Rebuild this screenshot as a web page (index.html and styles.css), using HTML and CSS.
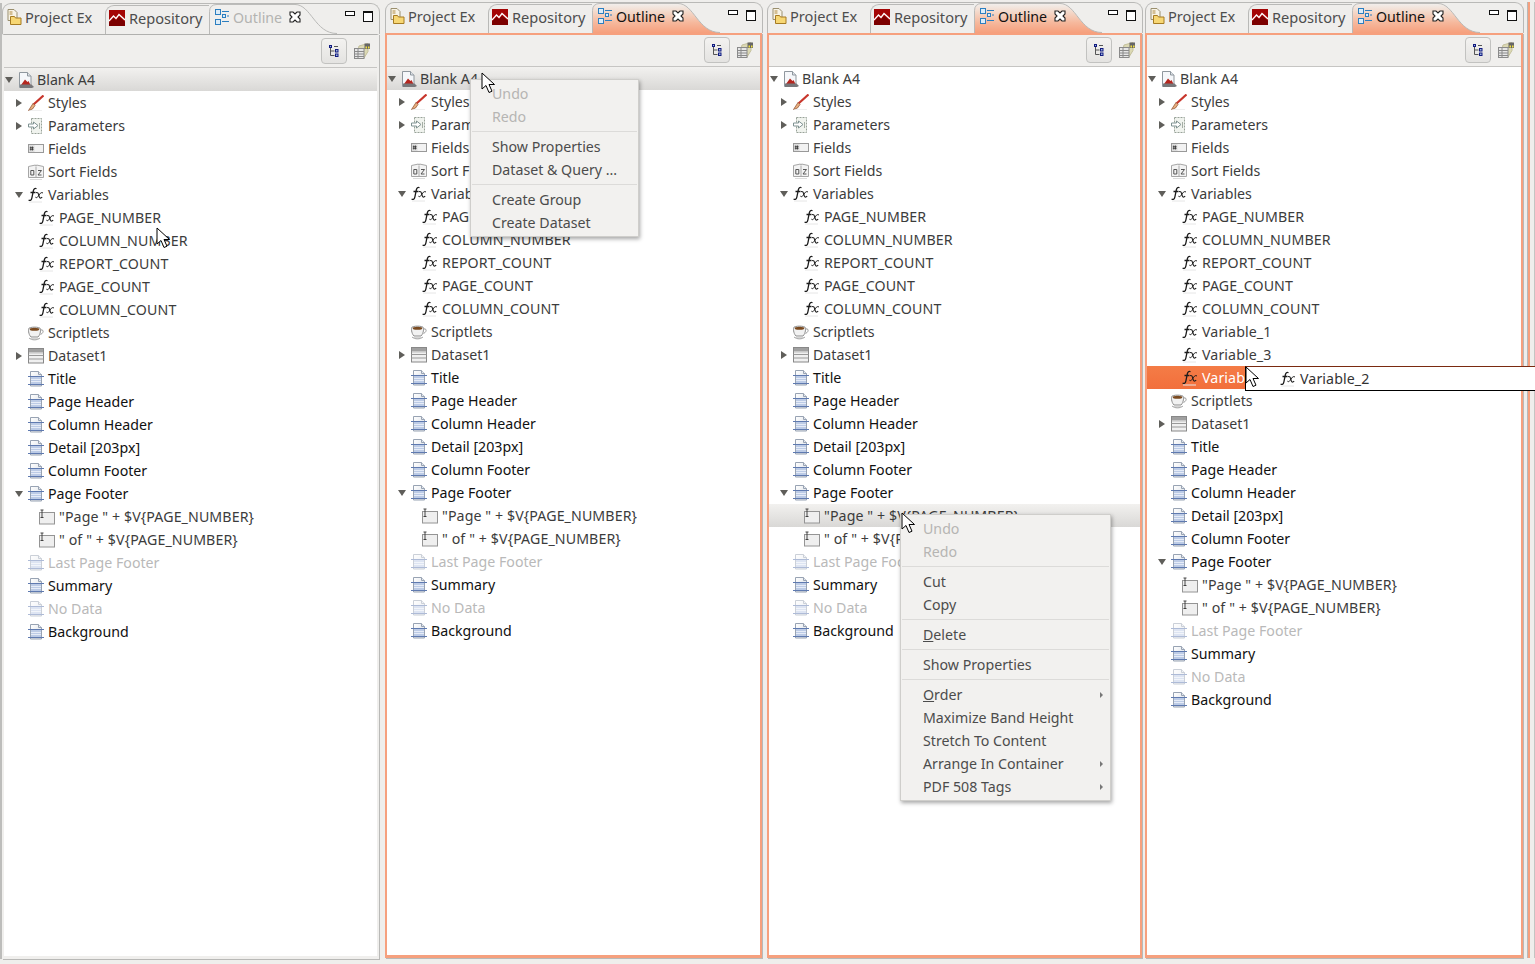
FILE: index.html
```html
<!DOCTYPE html>
<html lang="en">
<head>
<meta charset="utf-8">
<title>Outline views</title>
<link rel="stylesheet" href="styles.css">
</head>
<body>
<svg class="defs" aria-hidden="true">
  <defs>
    <linearGradient id="tabfill" x1="0" y1="0" x2="0" y2="1"><stop offset="0" stop-color="#f1efed"/><stop offset=".25" stop-color="#f3dccf"/><stop offset=".65" stop-color="#f6b89c"/><stop offset="1" stop-color="#f69f7c"/></linearGradient>
    <linearGradient id="doc" x1="0" y1="0" x2="1" y2="1"><stop offset="0" stop-color="#fff"/><stop offset="1" stop-color="#d8dde4"/></linearGradient>
    <symbol id="i-project" viewBox="0 0 16 16"><path d="M2 .5h6l3 3v8H2z" fill="#f7f3e6" stroke="#9a8f6e"/><path d="M3.500 3h3M3.500 5h3" stroke="#b08a40"/><path d="M4.500 7.500h4l1 1.500h5.500v6.500h-10.500z" fill="#f7d774" stroke="#a67b22"/></symbol>
    <symbol id="i-repo" viewBox="0 0 16 16"><rect width="16" height="16" fill="#a40606"/><path d="M0 11 4.500 6 7 8.500 10 4.500 16 10" fill="none" stroke="#fff" stroke-width="1.300"/><path d="M0 12.500 4.500 8 7 10.500 10 7 16 12v4H0z" fill="#7c0000"/></symbol>
    <symbol id="i-outline" viewBox="0 0 14 16"><g fill="#dcecf8" stroke="#2c7fc0"><rect x=".5" y=".5" width="5" height="5"/><rect x=".5" y="10.500" width="5" height="5"/></g><rect x="7.500" y="5.500" width="3" height="3" fill="#dcecf8" stroke="#2c7fc0"/><path d="M7 2.500h7M12 7h2M7 12.500h7" stroke="#2c7fc0"/></symbol>
    <symbol id="i-close" viewBox="0 0 12 12"><path d="M1 1h3l2 2 2-2h3v3l-2 2 2 2v3H8L6 9l-2 2H1V8l2-2-2-2z" fill="#fff" stroke="#222" stroke-width="1.100"/></symbol>
    <symbol id="i-tree" viewBox="0 0 10 12"><path d="M1.500 2v8.500h4M1.500 6h4" fill="none" stroke="#555"/><g fill="#9db4e0" stroke="#111a80"><rect x=".5" y=".5" width="2" height="2"/><rect x="6.500" y="4.500" width="2.500" height="2.500"/><rect x="6.500" y="9" width="2.500" height="2.500"/></g><path d="M5 1.500h4" stroke="#555"/></symbol>
    <symbol id="i-table" viewBox="0 0 16 16"><path d="M5 3 14 .5v8L10 15H2z" fill="#dcd9b4" stroke="#c4c09c"/><rect x=".5" y="5.500" width="9.500" height="10" fill="#e6e6e6" stroke="#8a8a8a"/><path d="M.5 8.500h9.500M.5 11h9.500M.5 13.500h9.500M4 5.500v10" stroke="#8a8a8a"/><rect x="10.500" y=".5" width="5.500" height="5.500" fill="#666"/><path d="M11.500 3.500h1.500v2h-1.500zM14 3.500h1.500v2H14z" fill="#f5e23c"/></symbol>
    <symbol id="i-report" viewBox="0 0 16 16"><path d="M1.500.5h8l3.500 3.500v11.500h-11.500z" fill="#f5f7fa" stroke="#8f979e"/><path d="M9.500.5v3.500h3.500" fill="#dfe3e8" stroke="#8f979e"/><path d="M3 13 7 7.500l2.500 2.500 1-1 2 4z" fill="#b5271f"/><path d="M2 12.500h11.500l2.500 2.500-2 1H2z" fill="#77777a"/></symbol>
    <symbol id="i-styles" viewBox="0 0 16 16"><path d="M15.500 .5 5.500 9.500" stroke="#c8362c" stroke-width="2.200"/><path d="M5 8.500 7 10.500 4.500 14 .5 15.500z" fill="#e8b080" stroke="#8a4a2a" stroke-width=".7"/><path d="M1 16h13" stroke="#dedede"/></symbol>
    <symbol id="i-param" viewBox="0 0 16 16"><path d="M3.500.5h10v15h-10z" fill="#f0f3ee" stroke="#98a298" stroke-dasharray="2 1"/><path d="M.5 6h5V4l4.500 3.500L5.500 11V9h-5z" fill="#fff" stroke="#7f9292"/><path d="M11.500 5v6" stroke="#a5aea5"/></symbol>
    <symbol id="i-field" viewBox="0 0 16 16"><rect x=".5" y="3.500" width="15" height="8" fill="#f2f2f2" stroke="#999"/><rect x="1" y="4" width="5.500" height="7" fill="#dedede"/><path d="M2.800 5.500v4M4.500 5.500v4M1.800 6.700h3.800M1.800 8.300h3.800" stroke="#333" stroke-width=".8"/></symbol>
    <symbol id="i-sort" viewBox="0 0 16 16"><path d="M.5 2.500 7.500 1 8 2l.5-1 7 1.500v11H.5z" fill="#f3f3f3" stroke="#a6a6a6"/><path d="M8 2.500v11" stroke="#aaa"/><path d="M2.800 6.500h3v4.500h-3zM10 6.500h3.500L10 11h3.500" fill="none" stroke="#555"/><path d="M2 15.500h12" stroke="#dcdcdc"/></symbol>
    <symbol id="i-fx" viewBox="0 0 16 16"><path d="M8.500 1.700C6.800 .8 5.800 1.800 5.300 4L3.900 10.800C3.400 13.200 2.300 14 .6 13M2.500 5.500h5" fill="none" stroke="#1c1c1c" stroke-width="1.300"/><path d="M8 5.700c1.700-.6 2.200.6 2.600 2l.8 2.500c.4 1.200 1.600 1.200 2.800 0" fill="none" stroke="#1c1c1c" stroke-width="1.100"/><path d="M15 6c-1.300-.8-2.300-.3-3.300 1L9.800 9.800c-.7 1-1.600 1.100-2.400.4" fill="none" stroke="#1c1c1c" stroke-width="1"/><path d="M1 15h13" stroke="#e6e6e6"/></symbol>
    <symbol id="i-cup" viewBox="0 0 16 16"><path d="M.5 4c0-2.500 12-2.500 12 0 0 0 .5 5-2.500 8H3C0 9 .5 4 .5 4z" fill="#f2f2f2" stroke="#8e8e8e"/><ellipse cx="6.500" cy="4.300" rx="4.800" ry="1.500" fill="#7a4a20"/><path d="M12.500 5c3.500-1 3.500 3 0 4.500" fill="none" stroke="#999"/><path d="M1 13c3 2.500 8 2.500 11 0" fill="#d5d5d5" stroke="#aaa"/></symbol>
    <symbol id="i-data" viewBox="0 0 16 16"><rect x=".5" y=".5" width="15" height="14.500" fill="#f0f0f0" stroke="#888"/><rect x="1" y="1" width="14" height="3.500" fill="#a0a0a0"/><path d="M.5 7.500h15M.5 11h15" stroke="#999"/><path d="M1 5.500h14" stroke="#d8d8d8"/></symbol>
    <symbol id="i-band" viewBox="0 0 16 16"><path d="M2.500.5h8l3 3v11.500h-11z" fill="url(#doc)" stroke="#98a3b3"/><path d="M10.500.5v3h3" fill="#e4e8ee" stroke="#98a3b3"/><rect x="3" y="6" width="10" height="7" fill="#bccbe6"/><path d="M0 5.500h16M0 13.500h16" stroke="#5f7ab0"/><path d="M3 8.500h10M3 10.500h10" stroke="#e6ecf7"/></symbol>
    <symbol id="i-text" viewBox="0 0 16 16"><rect x=".5" y="3.500" width="15" height="11.500" fill="#efefef" stroke="#949494"/><path d="M1.500 1h3M1.500 8.500h3M3 1v7.500" stroke="#333" stroke-width=".9"/></symbol>
    <symbol id="i-cursor" viewBox="0 0 14 22"><path d="M1 1v16l4-3.500 3 7 3-1.300-3-6.700h5.500z" fill="#fff" stroke="#000"/></symbol>
  </defs>
</svg>

<div class="desk">

<section class="panel p1 idle">
  <div class="tabs">
    <div class="tab first"><svg class="ti"><use href="#i-project"/></svg><span>Project Ex</span></div>
    <div class="tab second"><svg class="ti"><use href="#i-repo"/></svg><span>Repository</span></div>
    <div class="tab active"><svg class="shape" viewBox="0 0 128 31" preserveAspectRatio="none"><path class="sf" d="M.5 31V8Q.5 .5 8 .5H86C102 .5 106 30.500 128 30.500V31Z"/><path class="sl" d="M.5 31V8Q.5 .5 8 .5H86C102 .5 106 30.500 128 30.500"/></svg><svg class="ti oi"><use href="#i-outline"/></svg><span class="tname">Outline</span><svg class="x"><use href="#i-close"/></svg></div>
    <div class="winbtns"><i class="min"></i><i class="max"></i></div>
  </div>
  <div class="frame">
    <div class="toolbar"><div class="tb"><svg class="tbi"><use href="#i-tree"/></svg></div><svg class="tbt"><use href="#i-table"/></svg></div>
    <div class="tree">
      <div class="row l0 sel"><i class="tw d"></i><svg class="ic"><use href="#i-report"/></svg><span>Blank A4</span></div>
      <div class="row l1"><i class="tw c"></i><svg class="ic"><use href="#i-styles"/></svg><span>Styles</span></div>
      <div class="row l1"><i class="tw c"></i><svg class="ic"><use href="#i-param"/></svg><span>Parameters</span></div>
      <div class="row l1"><i class="tw"></i><svg class="ic"><use href="#i-field"/></svg><span>Fields</span></div>
      <div class="row l1"><i class="tw"></i><svg class="ic"><use href="#i-sort"/></svg><span>Sort Fields</span></div>
      <div class="row l1"><i class="tw d"></i><svg class="ic"><use href="#i-fx"/></svg><span>Variables</span></div>
      <div class="row l2"><i class="tw"></i><svg class="ic"><use href="#i-fx"/></svg><span>PAGE_NUMBER</span></div>
      <div class="row l2"><i class="tw"></i><svg class="ic"><use href="#i-fx"/></svg><span>COLUMN_NUMBER</span></div>
      <div class="row l2"><i class="tw"></i><svg class="ic"><use href="#i-fx"/></svg><span>REPORT_COUNT</span></div>
      <div class="row l2"><i class="tw"></i><svg class="ic"><use href="#i-fx"/></svg><span>PAGE_COUNT</span></div>
      <div class="row l2"><i class="tw"></i><svg class="ic"><use href="#i-fx"/></svg><span>COLUMN_COUNT</span></div>
      <div class="row l1"><i class="tw"></i><svg class="ic"><use href="#i-cup"/></svg><span>Scriptlets</span></div>
      <div class="row l1"><i class="tw c"></i><svg class="ic"><use href="#i-data"/></svg><span>Dataset1</span></div>
      <div class="row l1 b"><i class="tw"></i><svg class="ic"><use href="#i-band"/></svg><span>Title</span></div>
      <div class="row l1 b"><i class="tw"></i><svg class="ic"><use href="#i-band"/></svg><span>Page Header</span></div>
      <div class="row l1 b"><i class="tw"></i><svg class="ic"><use href="#i-band"/></svg><span>Column Header</span></div>
      <div class="row l1 b"><i class="tw"></i><svg class="ic"><use href="#i-band"/></svg><span>Detail [203px]</span></div>
      <div class="row l1 b"><i class="tw"></i><svg class="ic"><use href="#i-band"/></svg><span>Column Footer</span></div>
      <div class="row l1 b"><i class="tw d"></i><svg class="ic"><use href="#i-band"/></svg><span>Page Footer</span></div>
      <div class="row l2"><i class="tw"></i><svg class="ic"><use href="#i-text"/></svg><span>"Page " + $V{PAGE_NUMBER}</span></div>
      <div class="row l2"><i class="tw"></i><svg class="ic"><use href="#i-text"/></svg><span>" of " + $V{PAGE_NUMBER}</span></div>
      <div class="row l1 off"><i class="tw"></i><svg class="ic"><use href="#i-band"/></svg><span>Last Page Footer</span></div>
      <div class="row l1 b"><i class="tw"></i><svg class="ic"><use href="#i-band"/></svg><span>Summary</span></div>
      <div class="row l1 off"><i class="tw"></i><svg class="ic"><use href="#i-band"/></svg><span>No Data</span></div>
      <div class="row l1 b"><i class="tw"></i><svg class="ic"><use href="#i-band"/></svg><span>Background</span></div>
    </div>
  </div>
  <svg class="cursor cur1"><use href="#i-cursor"/></svg>
</section>

<section class="panel p2">
  <div class="tabs">
    <div class="tab first"><svg class="ti"><use href="#i-project"/></svg><span>Project Ex</span></div>
    <div class="tab second"><svg class="ti"><use href="#i-repo"/></svg><span>Repository</span></div>
    <div class="tab active"><svg class="shape" viewBox="0 0 128 31" preserveAspectRatio="none"><path class="sf" d="M.5 31V8Q.5 .5 8 .5H86C102 .5 106 30.500 128 30.500V31Z"/><path class="sl" d="M.5 31V8Q.5 .5 8 .5H86C102 .5 106 30.500 128 30.500"/></svg><svg class="ti oi"><use href="#i-outline"/></svg><span class="tname">Outline</span><svg class="x"><use href="#i-close"/></svg></div>
    <div class="winbtns"><i class="min"></i><i class="max"></i></div>
  </div>
  <div class="frame">
    <div class="toolbar"><div class="tb"><svg class="tbi"><use href="#i-tree"/></svg></div><svg class="tbt"><use href="#i-table"/></svg></div>
    <div class="tree">
      <div class="row l0 sel"><i class="tw d"></i><svg class="ic"><use href="#i-report"/></svg><span>Blank A4</span></div>
      <div class="row l1"><i class="tw c"></i><svg class="ic"><use href="#i-styles"/></svg><span>Styles</span></div>
      <div class="row l1"><i class="tw c"></i><svg class="ic"><use href="#i-param"/></svg><span>Parameters</span></div>
      <div class="row l1"><i class="tw"></i><svg class="ic"><use href="#i-field"/></svg><span>Fields</span></div>
      <div class="row l1"><i class="tw"></i><svg class="ic"><use href="#i-sort"/></svg><span>Sort Fields</span></div>
      <div class="row l1"><i class="tw d"></i><svg class="ic"><use href="#i-fx"/></svg><span>Variables</span></div>
      <div class="row l2"><i class="tw"></i><svg class="ic"><use href="#i-fx"/></svg><span>PAGE_NUMBER</span></div>
      <div class="row l2"><i class="tw"></i><svg class="ic"><use href="#i-fx"/></svg><span>COLUMN_NUMBER</span></div>
      <div class="row l2"><i class="tw"></i><svg class="ic"><use href="#i-fx"/></svg><span>REPORT_COUNT</span></div>
      <div class="row l2"><i class="tw"></i><svg class="ic"><use href="#i-fx"/></svg><span>PAGE_COUNT</span></div>
      <div class="row l2"><i class="tw"></i><svg class="ic"><use href="#i-fx"/></svg><span>COLUMN_COUNT</span></div>
      <div class="row l1"><i class="tw"></i><svg class="ic"><use href="#i-cup"/></svg><span>Scriptlets</span></div>
      <div class="row l1"><i class="tw c"></i><svg class="ic"><use href="#i-data"/></svg><span>Dataset1</span></div>
      <div class="row l1 b"><i class="tw"></i><svg class="ic"><use href="#i-band"/></svg><span>Title</span></div>
      <div class="row l1 b"><i class="tw"></i><svg class="ic"><use href="#i-band"/></svg><span>Page Header</span></div>
      <div class="row l1 b"><i class="tw"></i><svg class="ic"><use href="#i-band"/></svg><span>Column Header</span></div>
      <div class="row l1 b"><i class="tw"></i><svg class="ic"><use href="#i-band"/></svg><span>Detail [203px]</span></div>
      <div class="row l1 b"><i class="tw"></i><svg class="ic"><use href="#i-band"/></svg><span>Column Footer</span></div>
      <div class="row l1 b"><i class="tw d"></i><svg class="ic"><use href="#i-band"/></svg><span>Page Footer</span></div>
      <div class="row l2"><i class="tw"></i><svg class="ic"><use href="#i-text"/></svg><span>"Page " + $V{PAGE_NUMBER}</span></div>
      <div class="row l2"><i class="tw"></i><svg class="ic"><use href="#i-text"/></svg><span>" of " + $V{PAGE_NUMBER}</span></div>
      <div class="row l1 off"><i class="tw"></i><svg class="ic"><use href="#i-band"/></svg><span>Last Page Footer</span></div>
      <div class="row l1 b"><i class="tw"></i><svg class="ic"><use href="#i-band"/></svg><span>Summary</span></div>
      <div class="row l1 off"><i class="tw"></i><svg class="ic"><use href="#i-band"/></svg><span>No Data</span></div>
      <div class="row l1 b"><i class="tw"></i><svg class="ic"><use href="#i-band"/></svg><span>Background</span></div>
    </div>
  </div>
  <div class="menu m2">
    <div class="mi dis">Undo</div>
    <div class="mi dis">Redo</div>
    <hr class="ms">
    <div class="mi">Show Properties</div>
    <div class="mi">Dataset &amp; Query ...</div>
    <hr class="ms">
    <div class="mi">Create Group</div>
    <div class="mi">Create Dataset</div>
  </div>
  <svg class="cursor cur2"><use href="#i-cursor"/></svg>
</section>

<section class="panel p3">
  <div class="tabs">
    <div class="tab first"><svg class="ti"><use href="#i-project"/></svg><span>Project Ex</span></div>
    <div class="tab second"><svg class="ti"><use href="#i-repo"/></svg><span>Repository</span></div>
    <div class="tab active"><svg class="shape" viewBox="0 0 128 31" preserveAspectRatio="none"><path class="sf" d="M.5 31V8Q.5 .5 8 .5H86C102 .5 106 30.500 128 30.500V31Z"/><path class="sl" d="M.5 31V8Q.5 .5 8 .5H86C102 .5 106 30.500 128 30.500"/></svg><svg class="ti oi"><use href="#i-outline"/></svg><span class="tname">Outline</span><svg class="x"><use href="#i-close"/></svg></div>
    <div class="winbtns"><i class="min"></i><i class="max"></i></div>
  </div>
  <div class="frame">
    <div class="toolbar"><div class="tb"><svg class="tbi"><use href="#i-tree"/></svg></div><svg class="tbt"><use href="#i-table"/></svg></div>
    <div class="tree">
      <div class="row l0"><i class="tw d"></i><svg class="ic"><use href="#i-report"/></svg><span>Blank A4</span></div>
      <div class="row l1"><i class="tw c"></i><svg class="ic"><use href="#i-styles"/></svg><span>Styles</span></div>
      <div class="row l1"><i class="tw c"></i><svg class="ic"><use href="#i-param"/></svg><span>Parameters</span></div>
      <div class="row l1"><i class="tw"></i><svg class="ic"><use href="#i-field"/></svg><span>Fields</span></div>
      <div class="row l1"><i class="tw"></i><svg class="ic"><use href="#i-sort"/></svg><span>Sort Fields</span></div>
      <div class="row l1"><i class="tw d"></i><svg class="ic"><use href="#i-fx"/></svg><span>Variables</span></div>
      <div class="row l2"><i class="tw"></i><svg class="ic"><use href="#i-fx"/></svg><span>PAGE_NUMBER</span></div>
      <div class="row l2"><i class="tw"></i><svg class="ic"><use href="#i-fx"/></svg><span>COLUMN_NUMBER</span></div>
      <div class="row l2"><i class="tw"></i><svg class="ic"><use href="#i-fx"/></svg><span>REPORT_COUNT</span></div>
      <div class="row l2"><i class="tw"></i><svg class="ic"><use href="#i-fx"/></svg><span>PAGE_COUNT</span></div>
      <div class="row l2"><i class="tw"></i><svg class="ic"><use href="#i-fx"/></svg><span>COLUMN_COUNT</span></div>
      <div class="row l1"><i class="tw"></i><svg class="ic"><use href="#i-cup"/></svg><span>Scriptlets</span></div>
      <div class="row l1"><i class="tw c"></i><svg class="ic"><use href="#i-data"/></svg><span>Dataset1</span></div>
      <div class="row l1 b"><i class="tw"></i><svg class="ic"><use href="#i-band"/></svg><span>Title</span></div>
      <div class="row l1 b"><i class="tw"></i><svg class="ic"><use href="#i-band"/></svg><span>Page Header</span></div>
      <div class="row l1 b"><i class="tw"></i><svg class="ic"><use href="#i-band"/></svg><span>Column Header</span></div>
      <div class="row l1 b"><i class="tw"></i><svg class="ic"><use href="#i-band"/></svg><span>Detail [203px]</span></div>
      <div class="row l1 b"><i class="tw"></i><svg class="ic"><use href="#i-band"/></svg><span>Column Footer</span></div>
      <div class="row l1 b"><i class="tw d"></i><svg class="ic"><use href="#i-band"/></svg><span>Page Footer</span></div>
      <div class="row l2 sel"><i class="tw"></i><svg class="ic"><use href="#i-text"/></svg><span>"Page " + $V{PAGE_NUMBER}</span></div>
      <div class="row l2"><i class="tw"></i><svg class="ic"><use href="#i-text"/></svg><span>" of " + $V{PAGE_NUMBER}</span></div>
      <div class="row l1 off"><i class="tw"></i><svg class="ic"><use href="#i-band"/></svg><span>Last Page Footer</span></div>
      <div class="row l1 b"><i class="tw"></i><svg class="ic"><use href="#i-band"/></svg><span>Summary</span></div>
      <div class="row l1 off"><i class="tw"></i><svg class="ic"><use href="#i-band"/></svg><span>No Data</span></div>
      <div class="row l1 b"><i class="tw"></i><svg class="ic"><use href="#i-band"/></svg><span>Background</span></div>
    </div>
  </div>
  <div class="menu m3">
    <div class="mi dis">Undo</div>
    <div class="mi dis">Redo</div>
    <hr class="ms">
    <div class="mi">Cut</div>
    <div class="mi">Copy</div>
    <hr class="ms">
    <div class="mi"><u>D</u>elete</div>
    <hr class="ms">
    <div class="mi">Show Properties</div>
    <hr class="ms">
    <div class="mi sub"><span><u>O</u>rder</span></div>
    <div class="mi">Maximize Band Height</div>
    <div class="mi">Stretch To Content</div>
    <div class="mi sub"><span>Arrange In Container</span></div>
    <div class="mi sub"><span>PDF 508 Tags</span></div>
  </div>
  <svg class="cursor cur3"><use href="#i-cursor"/></svg>
</section>

<section class="panel p4">
  <div class="tabs">
    <div class="tab first"><svg class="ti"><use href="#i-project"/></svg><span>Project Ex</span></div>
    <div class="tab second"><svg class="ti"><use href="#i-repo"/></svg><span>Repository</span></div>
    <div class="tab active"><svg class="shape" viewBox="0 0 128 31" preserveAspectRatio="none"><path class="sf" d="M.5 31V8Q.5 .5 8 .5H86C102 .5 106 30.500 128 30.500V31Z"/><path class="sl" d="M.5 31V8Q.5 .5 8 .5H86C102 .5 106 30.500 128 30.500"/></svg><svg class="ti oi"><use href="#i-outline"/></svg><span class="tname">Outline</span><svg class="x"><use href="#i-close"/></svg></div>
    <div class="winbtns"><i class="min"></i><i class="max"></i></div>
  </div>
  <div class="frame">
    <div class="toolbar"><div class="tb"><svg class="tbi"><use href="#i-tree"/></svg></div><svg class="tbt"><use href="#i-table"/></svg></div>
    <div class="tree">
      <div class="row l0"><i class="tw d"></i><svg class="ic"><use href="#i-report"/></svg><span>Blank A4</span></div>
      <div class="row l1"><i class="tw c"></i><svg class="ic"><use href="#i-styles"/></svg><span>Styles</span></div>
      <div class="row l1"><i class="tw c"></i><svg class="ic"><use href="#i-param"/></svg><span>Parameters</span></div>
      <div class="row l1"><i class="tw"></i><svg class="ic"><use href="#i-field"/></svg><span>Fields</span></div>
      <div class="row l1"><i class="tw"></i><svg class="ic"><use href="#i-sort"/></svg><span>Sort Fields</span></div>
      <div class="row l1"><i class="tw d"></i><svg class="ic"><use href="#i-fx"/></svg><span>Variables</span></div>
      <div class="row l2"><i class="tw"></i><svg class="ic"><use href="#i-fx"/></svg><span>PAGE_NUMBER</span></div>
      <div class="row l2"><i class="tw"></i><svg class="ic"><use href="#i-fx"/></svg><span>COLUMN_NUMBER</span></div>
      <div class="row l2"><i class="tw"></i><svg class="ic"><use href="#i-fx"/></svg><span>REPORT_COUNT</span></div>
      <div class="row l2"><i class="tw"></i><svg class="ic"><use href="#i-fx"/></svg><span>PAGE_COUNT</span></div>
      <div class="row l2"><i class="tw"></i><svg class="ic"><use href="#i-fx"/></svg><span>COLUMN_COUNT</span></div>
      <div class="row l2"><i class="tw"></i><svg class="ic"><use href="#i-fx"/></svg><span>Variable_1</span></div>
      <div class="row l2"><i class="tw"></i><svg class="ic"><use href="#i-fx"/></svg><span>Variable_3</span></div>
      <div class="row l2 drop"><i class="tw"></i><svg class="ic"><use href="#i-fx"/></svg><span>Variable_2</span>
        <div class="ghost"><svg class="ic"><use href="#i-fx"/></svg><span>Variable_2</span></div>
      </div>
      <div class="row l1"><i class="tw"></i><svg class="ic"><use href="#i-cup"/></svg><span>Scriptlets</span></div>
      <div class="row l1"><i class="tw c"></i><svg class="ic"><use href="#i-data"/></svg><span>Dataset1</span></div>
      <div class="row l1 b"><i class="tw"></i><svg class="ic"><use href="#i-band"/></svg><span>Title</span></div>
      <div class="row l1 b"><i class="tw"></i><svg class="ic"><use href="#i-band"/></svg><span>Page Header</span></div>
      <div class="row l1 b"><i class="tw"></i><svg class="ic"><use href="#i-band"/></svg><span>Column Header</span></div>
      <div class="row l1 b"><i class="tw"></i><svg class="ic"><use href="#i-band"/></svg><span>Detail [203px]</span></div>
      <div class="row l1 b"><i class="tw"></i><svg class="ic"><use href="#i-band"/></svg><span>Column Footer</span></div>
      <div class="row l1 b"><i class="tw d"></i><svg class="ic"><use href="#i-band"/></svg><span>Page Footer</span></div>
      <div class="row l2"><i class="tw"></i><svg class="ic"><use href="#i-text"/></svg><span>"Page " + $V{PAGE_NUMBER}</span></div>
      <div class="row l2"><i class="tw"></i><svg class="ic"><use href="#i-text"/></svg><span>" of " + $V{PAGE_NUMBER}</span></div>
      <div class="row l1 off"><i class="tw"></i><svg class="ic"><use href="#i-band"/></svg><span>Last Page Footer</span></div>
      <div class="row l1 b"><i class="tw"></i><svg class="ic"><use href="#i-band"/></svg><span>Summary</span></div>
      <div class="row l1 off"><i class="tw"></i><svg class="ic"><use href="#i-band"/></svg><span>No Data</span></div>
      <div class="row l1 b"><i class="tw"></i><svg class="ic"><use href="#i-band"/></svg><span>Background</span></div>
    </div>
  </div>
  <svg class="cursor cur4"><use href="#i-cursor"/></svg>
</section>

<div class="stub"></div>
</div>
</body>
</html>
```

FILE: styles.css
```css
html, body { margin: 0; padding: 0; height: 964px; overflow: hidden; background: #efeeec; }
body { font-family: "Noto Sans", "Open Sans", sans-serif; font-size: 14.2px; color: #3c3c3c; }
.defs { position: absolute; width: 0; height: 0; }

.desk { display: flex; align-items: flex-start; height: 964px; }
.panel { position: relative; display: flex; flex-direction: column; height: 956px; margin-top: 2px; box-sizing: border-box; flex: none; }
.p1 { width: 378px; margin-top: 3px; margin-left: 2px; box-shadow: -2px 0 0 #bdbdbb; }
.p2 { width: 378px; margin-left: 5px; }
.p3 { width: 376px; margin-left: 4px; }
.p4 { width: 379px; margin-left: 2px; }
.stub { flex: none; width: 8px; height: 956px; margin: 2px 0 0 3px; border-left: 1px solid #b9b9b7; border-right: 1px solid #c4c4c2; box-sizing: border-box; box-shadow: inset 2px 0 0 #f6a07e; }

/* tab strip */
.tabs { display: flex; height: 31px; flex: none; box-sizing: border-box; padding-left: 2px; border: 1px solid #b9b9b7; border-bottom: 0; border-radius: 9px 9px 0 0; }
.tab { position: relative; display: flex; align-items: center; height: 30px; box-sizing: border-box; padding-bottom: 4px; white-space: nowrap; color: #4d4d4d; font-size: 14.6px; }
.tab.first { width: 100px; padding-left: 1px; }
.tab.first .ti { margin-right: 3px; }
.tab.second { width: 104px; padding-left: 3px; padding-bottom: 5px; border-left: 1px solid #b9b9b7; border-top: 1px solid #b9b9b7; border-top-left-radius: 9px; margin-top: 1px; height: 29px; }
.tab.active { width: 128px; padding-left: 6px; }
.ti { width: 16px; height: 16px; margin-right: 4px; flex: none; position: relative; }
.oi { width: 14px; margin-right: 4px; }
.shape { position: absolute; left: 0; top: 0; width: 128px; height: 30px; }
.sf { fill: url(#tabfill); }
.sl { fill: none; stroke: #b9b9b7; }
.tname { position: relative; color: #111; width: 56px; font-size: 14.2px; }
.idle .tname { color: #b3b3b1; }
.idle .sf { fill: #f0efed; }
.x { position: relative; width: 12px; height: 12px; flex: none; }
.winbtns { display: flex; gap: 8px; margin-left: auto; padding: 7px 6px 0 0; align-items: flex-start; }
.min { display: block; width: 10px; height: 5px; box-sizing: border-box; border: 1px solid #111; background: #fff; }
.max { display: block; width: 10px; height: 11px; box-sizing: border-box; border: 1px solid #111; border-top-width: 2px; background: #fff; }

/* view frame */
.frame { flex: 1; display: flex; flex-direction: column; min-height: 0; box-sizing: border-box; border: solid #f6a07e; border-width: 2px 2px 3px; box-shadow: 1px 1px 0 #b9b9b7; background: #f0efed; margin-right: 1px; }
.idle .frame { border-color: #f0efed; border-top-color: #b0b0ae; border-top-width: 1px; }
.toolbar { height: 30px; padding-bottom: 1px; flex: none; display: flex; justify-content: flex-end; align-items: center; gap: 7px; padding-right: 7px; border-bottom: 1px solid #c6c5c3; box-sizing: content-box; }
.p3 .toolbar { padding-right: 5px; }
.idle .toolbar { height: 31px; }
.tb { width: 24px; height: 24px; border: 1px solid #c2c2c0; border-radius: 4px; background: linear-gradient(#f3f2f0, #e4e3e1); display: flex; align-items: center; justify-content: center; }
.tbi { width: 10px; height: 12px; }
.tbt { width: 16px; height: 16px; }

/* tree */
.tree { position: relative; flex: 1; background: #fff; min-height: 0; }
.row { position: relative; display: flex; align-items: center; height: 23px; white-space: nowrap; color: #3c3c3c; }
.l0 { padding-left: 0; }
.l1 { padding-left: 10px; }
.l2 { padding-left: 21px; letter-spacing: .1px; }
.tw { display: block; width: 10px; height: 10px; margin-right: 4px; flex: none; position: relative; }
.tw.c::before { content: ""; position: absolute; left: 2px; top: 1px; border-left: 6px solid #5f5e5a; border-top: 4px solid transparent; border-bottom: 4px solid transparent; }
.tw.d::before { content: ""; position: absolute; left: 1px; top: 2px; border-top: 6px solid #5f5e5a; border-left: 4px solid transparent; border-right: 4px solid transparent; }
.ic { width: 16px; height: 16px; margin-right: 3px; flex: none; }
.l1 .ic, .l2 .ic { margin-right: 4px; }
.b { color: #111; }
.off { color: #b9b9b9; }
.off .ic { opacity: .5; }
.sel { background: linear-gradient(#f2f1ef, #d9d8d6); }
.drop { background: linear-gradient(#f47c46, #f26f3c); color: #fff; }
.ghost { position: absolute; left: 98px; top: 0; height: 25px; width: 300px; box-sizing: border-box; display: flex; align-items: center; padding-left: 34px; background: #fff; color: #333; border: 1px solid #000; border-top-color: #7a2a10; border-right: 0; }

/* popup menus */
.menu { position: absolute; z-index: 3; box-sizing: border-box; padding: 2px 1px; background: #f2f1ef; border: 1px solid #cfcecb; box-shadow: 1px 2px 4px rgba(0,0,0,.35); color: #4c4c4c; }
.m2 { left: 85px; top: 77px; width: 169px; }
.m3 { left: 133px; top: 512px; width: 211px; }
.m3 .mi { padding-left: 21px; }
.mi { height: 23px; line-height: 23px; padding-left: 20px; white-space: nowrap; }
.dis { color: #b6b5b3; }
.ms { height: 1px; border: 0; margin: 3px 0; background: #dcdbd9; }
.sub { position: relative; }
.sub::after { content: ""; position: absolute; right: 6px; top: 9px; border-left: 3px solid #777; border-top: 3px solid transparent; border-bottom: 3px solid transparent; }

/* mouse pointers */
.cursor { position: absolute; z-index: 4; width: 14px; height: 22px; }
.cur1 { left: 154px; top: 224px; }
.cur2 { left: 96px; top: 70px; }
.cur3 { left: 134px; top: 510px; }
.cur4 { left: 100px; top: 364px; }
```
